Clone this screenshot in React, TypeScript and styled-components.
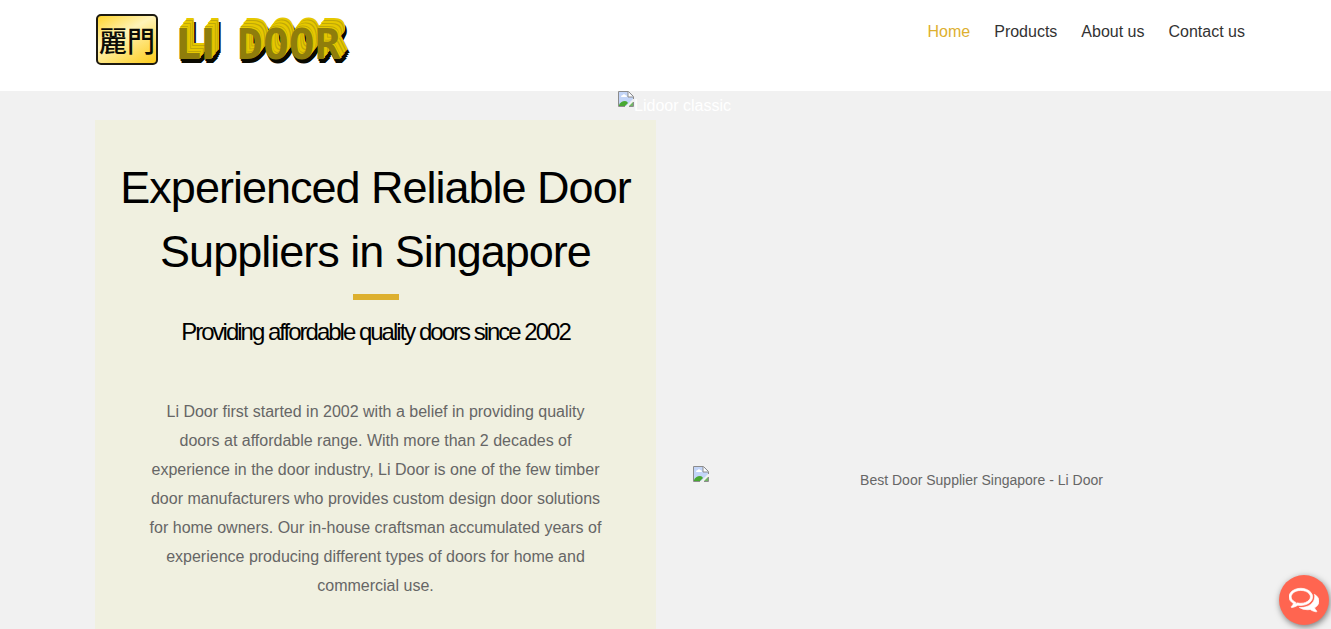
import React from "react";
import styled, { createGlobalStyle } from "styled-components";

const GlobalStyle = createGlobalStyle`
  *, *::before, *::after { box-sizing: border-box; }
  body {
    margin: 0;
    background: #f1f1f1;
    color: #666;
    font: 16px/29px "Liberation Sans", Arial, sans-serif;
  }
  h1, h2, p { margin: 0; font-weight: 400; }
`;

const Page = styled.div`
  display: flex;
  flex-direction: column;
  min-height: 100vh;
`;

const Header = styled.header`
  display: flex;
  justify-content: space-between;
  align-items: flex-start;
  height: 91px;
  padding: 14px 86px 0 96px;
  background: #fff;
`;

const Logo = styled.a`
  display: flex;
  gap: 18px;
  text-decoration: none;
`;

const Seal = styled.span`
  display: flex;
  align-items: center;
  justify-content: center;
  width: 62px;
  height: 51px;
  border: 2px solid #1d1a10;
  border-radius: 5px;
  background: linear-gradient(150deg, #ffd52e 0%, #fff3b8 40%, #ffe680 60%, #fccb1a 100%);
  color: #0c0b06;
  font: 500 28px/46px "Noto Sans CJK TC", sans-serif;
`;

const depth = [
  [1, -1], [1, -2], [2, -3], [3, -4], [4, -5], [4, -6], [5, -7], [6, -8], [7, -9], [7, -10],
];

const base = [
  [1, 2], [2, 4], [3, 3], [4, 2], [5, 1], [6, 0], [7, -2], [8, -4], [9, -6],
];

const extrusion = [
  ...depth.map(([x, y], i) => `${x}px ${y}px 0 ${i % 3 === 1 ? "#c0a808" : "#e6c800"}`),
  ...base.map(([x, y]) => `${x}px ${y}px 0 #0a0900`),
].join(", ");

const Wordmark = styled.span`
  display: flex;
  gap: 22px;
  padding-top: 5px;
  color: #8f7d0b;
  text-shadow: ${extrusion};
`;

const Word = styled.span<{ $mono?: boolean }>`
  font: 700 43px/50px ${(p) => (p.$mono ? '"DejaVu Sans Mono", monospace' : '"DejaVu Sans Condensed", "DejaVu Sans", sans-serif')};
`;

const Nav = styled.nav`
  display: flex;
  gap: 24px;
  padding-top: 3px;
`;

const NavLink = styled.a<{ $active?: boolean }>`
  color: ${(p) => (p.$active ? "#ddb02f" : "#333")};
  text-decoration: none;
`;

const Banner = styled.div`
  display: flex;
  justify-content: center;
  height: 29px;
  padding-left: 18px;
  color: #fff;
`;

const Columns = styled.main`
  flex: 1;
  display: grid;
  grid-template-columns: 1fr 1fr;
  gap: 37px;
  padding: 0 77px 0 95px;
`;

const Intro = styled.section`
  display: flex;
  flex-direction: column;
  align-items: center;
  padding: 36px 24px 28px;
  background: #f0f0e0;
  text-align: center;
`;

const Title = styled.h1`
  color: #000;
  font-size: 45px;
  line-height: 64px;
  letter-spacing: -1px;
`;

const Rule = styled.span`
  width: 46px;
  height: 6px;
  margin: 10px 0 15px;
  background: #ddb02f;
`;

const Subtitle = styled.h2`
  color: #000;
  font-size: 24px;
  line-height: 34px;
  letter-spacing: -2px;
`;

const Story = styled.p`
  max-width: 460px;
  margin-top: 48px;
`;

const Media = styled.figure`
  display: flex;
  align-self: start;
  margin: 346px 0 0;
`;

const Caption = styled.figcaption`
  flex: 1;
  font-size: 14px;
  text-align: center;
`;

const ChatButton = styled.button`
  position: fixed;
  right: 2px;
  bottom: 4px;
  display: flex;
  align-items: center;
  justify-content: center;
  width: 50px;
  height: 50px;
  padding: 0 0 2px;
  border: 0;
  border-radius: 50%;
  background: #ff6550;
  color: #fff;
  box-shadow: 1px 2px 6px rgba(0, 0, 0, 0.5);
  cursor: pointer;
`;

const Thumb = styled.svg`
  flex: none;
  width: 16px;
  height: 16px;
`;

function PictureIcon() {
  return (
    <Thumb viewBox="0 0 16 16" aria-hidden="true">
      <path d="M1 1H10L15 6V8L8 15H1Z" fill="#c3d5f8" />
      <path d="M3 6Q3 4 5 4Q6 2 7 4Q9 4 9 6Z" fill="#fff" />
      <path d="M1 15V14Q3 10 7 10Q9 10 10 12L7 15Z" fill="#48a832" />
      <path d="M15 11V15H11Z" fill="#72b565" />
      <path d="M10 1V6H15" fill="#fff" stroke="#8c8c8c" />
      <path d="M15.5 8V5.500L10.500.5H.5V15.500H7M11 15.500H15.500V11" fill="none" stroke="#8c8c8c" />
    </Thumb>
  );
}

function ChatIcon() {
  return (
    <svg width="30" height="30" viewBox="0 0 1792 1792" fill="currentColor" aria-hidden="true">
      <path d="M704 384q-153 0-286 52t-211.500 141-78.500 191q0 82 53 158t149 132l97 56-35 84q34-20 62-39l44-31 53 10q78 14 153 14 153 0 286-52t211.500-141 78.500-191-78.500-191-211.500-141-286-52zm0-128q191 0 353.500 68.500t256.500 186.500 94 257-94 257-256.500 186.500-353.500 68.500q-86 0-176-16-124 88-278 128-36 9-86 16h-3q-11 0-20.500-8t-11.500-21q-1-3-1-6.500t.5-6.500 2-6l2.500-5 3.500-5.500 4-5 4.500-5 4-4.500q5-6 23-25t26-29.500 22.500-29 25-38.500 20.500-44q-124-72-195-177t-71-224q0-139 94-257t256.500-186.500 353.500-68.500zm822 1169q10 24 20.500 44t25 38.500 22.500 29 26 29.500 23 25q1 1 4 4.500t4.500 5 4 5 3.500 5.500l2.500 5 2 6 .5 6.500-1 6.500q-3 14-13 22t-22 7q-50-7-86-16-154-40-278-128-90 16-176 16-271 0-472-132 58 4 88 4 161 0 309-45t264-129q125-92 192-212t67-254q0-77-23-152 129 71 204 178t75 230q0 120-71 224.500t-195 176.500z" stroke="currentColor" strokeWidth="40" />
    </svg>
  );
}

export default function App() {
  return (
    <Page>
      <GlobalStyle />
      <Header>
        <Logo href="#home">
          <Seal>麗門</Seal>
          <Wordmark>
            <Word>LI</Word>
            <Word $mono>DOOR</Word>
          </Wordmark>
        </Logo>
        <Nav>
          <NavLink href="#home" $active>Home</NavLink>
          <NavLink href="#products">Products</NavLink>
          <NavLink href="#about">About us</NavLink>
          <NavLink href="#contact">Contact us</NavLink>
        </Nav>
      </Header>
      <Banner>
        <PictureIcon />
        <span>Lidoor classic</span>
      </Banner>
      <Columns>
        <Intro>
          <Title>Experienced Reliable Door Suppliers in Singapore</Title>
          <Rule />
          <Subtitle>Providing affordable quality doors since 2002</Subtitle>
          <Story>
            Li Door first started in 2002 with a belief in providing quality doors at affordable
            range. With more than 2 decades of experience in the door industry, Li Door is one of
            the few timber door manufacturers who provides custom design door solutions for home
            owners. Our in-house craftsman accumulated years of experience producing different types
            of doors for home and commercial use.
          </Story>
        </Intro>
        <Media>
          <PictureIcon />
          <Caption>Best Door Supplier Singapore - Li Door</Caption>
        </Media>
      </Columns>
      <ChatButton type="button" aria-label="Chat">
        <ChatIcon />
      </ChatButton>
    </Page>
  );
}
